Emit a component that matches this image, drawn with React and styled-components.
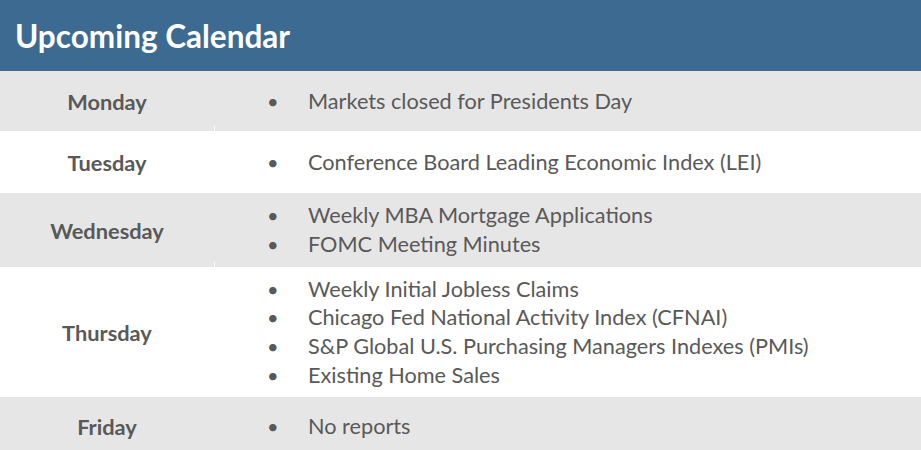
import React from 'react'
import styled, { createGlobalStyle } from 'styled-components'

const GlobalStyle = createGlobalStyle`
    body {
        margin: 0;
        background: #ffffff;
        font-family: Lato, "Open Sans", sans-serif;
    }
`

const Container = styled.div`
    width: 921px;
    height: 450px;
    overflow: hidden;
`

const Header = styled.div`
    height: 71px;
    background: #3d6a91;
    display: flex;
    align-items: center;
    padding-left: 15px;
`

const Title = styled.h1`
    margin: 0;
    color: #ffffff;
    font-size: 31.5px;
    font-weight: 700;
`

const Row = styled.div`
    display: grid;
    grid-template-columns: 215px 1fr;
    height: ${p => p.height}px;
    background: ${p => (p.shaded ? '#e7e6e6' : '#ffffff')};
`

// small white cell-edge tick at the bottom of each shaded row
const Day = styled.div`
    display: flex;
    align-items: center;
    justify-content: center;
    color: #595959;
    font-size: 21.8px;
    font-weight: 700;
    border-right: 1px solid;
    border-image: linear-gradient(to bottom, transparent calc(100% - 6px), #ffffff calc(100% - 6px)) 1;
`

const List = styled.ul`
    margin: 0;
    padding: 0;
    list-style: none;
    display: flex;
    flex-direction: column;
    justify-content: center;
`

const Item = styled.li`
    display: flex;
    color: #595959;
    font-size: 21.7px;
    line-height: 28.7px;

    &::before {
        content: '•';
        width: 93px;
        padding-left: 52px;
        box-sizing: border-box;
        flex-shrink: 0;
        font-size: 20px;
    }
`

const days = [
    { name: 'Monday', height: 60, items: ['Markets closed for Presidents Day'] },
    { name: 'Tuesday', height: 62, items: ['Conference Board Leading Economic Index (LEI)'] },
    { name: 'Wednesday', height: 74, items: ['Weekly MBA Mortgage Applications', 'FOMC Meeting Minutes'] },
    {
        name: 'Thursday',
        height: 130,
        items: [
            'Weekly Initial Jobless Claims',
            'Chicago Fed National Activity Index (CFNAI)',
            'S&P Global U.S. Purchasing Managers Indexes (PMIs)',
            'Existing Home Sales',
        ],
    },
    { name: 'Friday', height: 58, items: ['No reports'] },
]

const App = () => {
    return (
        <>
            <GlobalStyle />
            <Container>
                <Header>
                    <Title>Upcoming Calendar</Title>
                </Header>
                {days.map((d, i) => (
                    <Row key={d.name} height={d.height} shaded={i % 2 === 0}>
                        <Day>{d.name}</Day>
                        <List>
                            {d.items.map(t => (
                                <Item key={t}>{t}</Item>
                            ))}
                        </List>
                    </Row>
                ))}
            </Container>
        </>
    )
}

export default App
